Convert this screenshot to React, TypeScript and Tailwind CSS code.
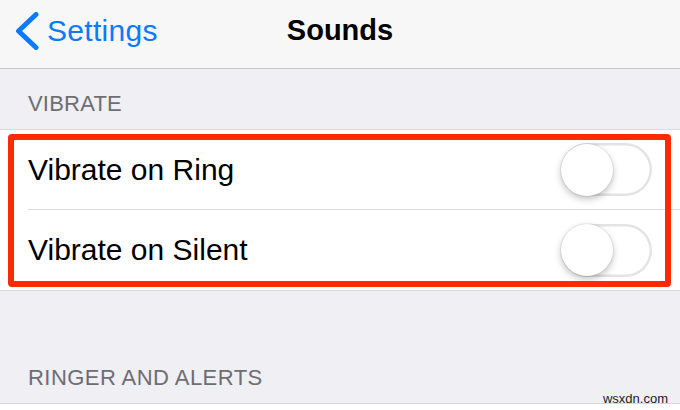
import React from "react";

function Toggle() {
  return (
    <div className="relative w-[91px] h-[53px] rounded-full bg-white shadow-[inset_0_0_0_2.5px_#e4e4e4] shrink-0">
      <div className="absolute left-0 top-[0.5px] w-[52px] h-[52px] rounded-full bg-white shadow-[0_3px_7px_rgba(0,0,0,0.25),0_0_0_1px_rgba(0,0,0,0.06)]" />
    </div>
  );
}

export default function App() {
  return (
    <div className="relative w-[680px] h-[410px] overflow-hidden bg-white font-['Liberation_Sans',Arial,sans-serif]">
      {/* Nav bar */}
      <div className="h-[69px] bg-[#f7f7f7] border-b border-[#c6c6ca] grid grid-cols-[1fr_auto_1fr] items-start pt-[16px]">
        <div className="flex items-start pl-[14px]">
          <svg width="26" height="38" viewBox="0 0 26 38" className="-mt-[4px] shrink-0">
            <path
              d="M22 2.5 L4.5 19 L22 35.5"
              fill="none"
              stroke="#0a7aff"
              strokeWidth="5"
              strokeLinecap="round"
              strokeLinejoin="round"
            />
          </svg>
          <span className="ml-[7px] text-[30px] leading-none tracking-[0.3px] text-[#0a7aff]">
            Settings
          </span>
        </div>
        <div className="text-[29px] leading-none font-bold text-black">Sounds</div>
        <div />
      </div>

      {/* VIBRATE header */}
      <div className="h-[61px] bg-[#efeff4] border-b border-[#dcdce0] pl-[28px] pt-[24px] text-[22px] leading-none tracking-[0.2px] text-[#6d6d72]">
        VIBRATE
      </div>

      {/* List */}
      <div className="relative bg-white border-b border-[#d8d8dc]">
        <div className="h-[80px] pl-[28px]">
          <div className="h-full flex items-center justify-between pr-[28px] border-b border-[#dcdce0]">
            <span className="text-[30px] leading-none text-black">Vibrate on Ring</span>
            <Toggle />
          </div>
        </div>
        <div className="h-[80px] pl-[28px]">
          <div className="h-full flex items-center justify-between pr-[28px]">
            <span className="text-[30px] leading-none text-black">Vibrate on Silent</span>
            <Toggle />
          </div>
        </div>
        <div className="absolute left-[8px] right-[9px] top-[4px] bottom-[3px] border-[6px] border-[#ff2a00] rounded-[4px] pointer-events-none" />
      </div>

      {/* Ringer header */}
      <div className="h-[113px] bg-[#efeff4] border-b border-[#d8d8dc] pl-[28px] pt-[76px] text-[22px] leading-none tracking-[0.45px] text-[#6d6d72]">
        RINGER AND ALERTS
      </div>

      <div className="absolute right-[12px] bottom-[5px] text-[13px] leading-none text-[#222]">
        wsxdn.com
      </div>
    </div>
  );
}
